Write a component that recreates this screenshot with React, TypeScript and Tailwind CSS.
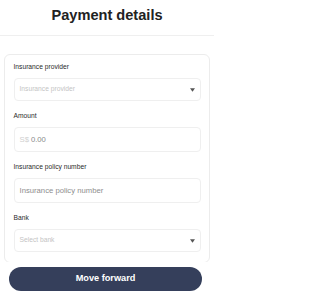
export default function App() {
  const font = { fontFamily: '"Liberation Sans", Arial, sans-serif' };

  return (
    <div className="flex h-[300px] w-[214px] flex-col bg-white" style={font}>
      <div className="flex h-[36px] shrink-0 items-start justify-center border-b border-[#efefef] pt-[5px]">
        <h1 className="text-[14.6px] font-bold leading-[20px] text-[#222222]">Payment details</h1>
      </div>

      <div className="min-h-0 flex-1 overflow-hidden px-[4px] pt-[18px]">
        <div className="rounded-[6px] border border-[#ececec] px-[8.5px] pt-[7px] pb-[10px]">
          <Field label="Insurance provider">
            <Select placeholder="Insurance provider" />
          </Field>

          <Field label="Amount" className="mt-[10px]">
            <div className="flex h-[25px] items-center rounded-[4px] border border-[#efefef] px-[5px] text-[7.7px]">
              <span className="text-[#cfcfcf]">S$</span>
              <span className="ml-[2px] text-[#8a8a8a]">0.00</span>
            </div>
          </Field>

          <Field label="Insurance policy number" className="mt-[10px]">
            <div className="flex h-[25px] items-center rounded-[4px] border border-[#efefef] px-[5px] text-[7.7px] text-[#8e8e8e]">
              Insurance policy number
            </div>
          </Field>

          <Field label="Bank" className="mt-[10px]">
            <Select placeholder="Select bank" />
          </Field>
        </div>
      </div>

      <div className="shrink-0 bg-white pt-[5px] pb-[9px]">
        <button className="ml-[9px] flex h-[24px] w-[193px] items-center justify-center rounded-full bg-[#353f5b] text-[9.2px] font-bold text-white">
          Move forward
        </button>
      </div>
    </div>
  );
}

function Field({
  label,
  className = "",
  children,
}: {
  label: string;
  className?: string;
  children: React.ReactNode;
}) {
  return (
    <div className={className}>
      <div className="text-[6.7px] leading-[9px] text-[#2a2a2a]">{label}</div>
      <div className="mt-[7px]">{children}</div>
    </div>
  );
}

function Select({ placeholder }: { placeholder: string }) {
  return (
    <div className="flex h-[23px] items-center justify-between rounded-[4px] border border-[#efefef] pl-[5px] pr-[5px]">
      <span className="text-[6.7px] text-[#c4c4c4]">{placeholder}</span>
      <svg width="5" height="4" viewBox="0 0 5 4" aria-hidden="true">
        <path d="M0 0.3h5L2.5 3.7z" fill="#555555" />
      </svg>
    </div>
  );
}
